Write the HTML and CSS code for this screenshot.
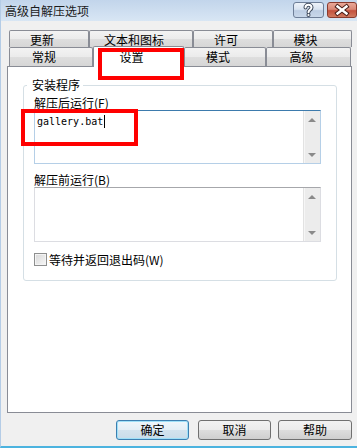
FILE: index.html
```html
<!DOCTYPE html>
<html lang="zh-CN">
<head>
<meta charset="utf-8">
<title>高级自解压选项</title>
<link rel="stylesheet" href="styles.css">
</head>
<body>
<div class="window">
  <div class="titlebar">
    <span class="title">高级自解压选项</span>
    <div class="caption-btns">
      <div class="cbtn help">
        <svg width="31" height="16" viewBox="-15.5 -8 31 16">
          <path d="M-3 -2.6 C-3 -6 3 -6 3 -2.6 C3 -0.3 0 -0.3 0 2.2" fill="none" stroke="#3d4a5c" stroke-width="4" stroke-linecap="round"/>
          <circle cx="0" cy="5" r="2" fill="#3d4a5c"/>
          <path d="M-3 -2.6 C-3 -6 3 -6 3 -2.6 C3 -0.3 0 -0.3 0 2.2" fill="none" stroke="#fff" stroke-width="2" stroke-linecap="round"/>
          <circle cx="0" cy="5" r="1.1" fill="#fff"/>
        </svg>
      </div>
      <div class="cbtn close">
        <svg width="30" height="16" viewBox="-15 -8 30 16">
          <path d="M-4.5 -3.5 L4.5 3.5 M4.5 -3.5 L-4.5 3.5" stroke="#4a1e18" stroke-width="4.4" stroke-linecap="square"/>
          <path d="M-4.5 -3.5 L4.5 3.5 M4.5 -3.5 L-4.5 3.5" stroke="#fff" stroke-width="2.4" stroke-linecap="square"/>
        </svg>
      </div>
    </div>
  </div>

  <div class="body">
    <div class="tabs">
      <div class="tabrow row1">
        <div class="tab t-update">更新</div>
        <div class="tab t-text">文本和图标</div>
        <div class="tab t-license">许可</div>
        <div class="tab t-module">模块</div>
      </div>
      <div class="tabrow row2">
        <div class="tab t-general">常规</div>
        <div class="tab t-setup selected">设置</div>
        <div class="tab t-mode">模式</div>
        <div class="tab t-advanced">高级</div>
      </div>
    </div>

    <div class="panel">
      <fieldset class="group">
        <legend>安装程序</legend>
        <div class="lbl">解压后运行(F)</div>
        <div class="edit focused">
          <div class="edit-text"><span class="mono">gallery.bat</span><span class="caret"></span></div>
          <div class="vscroll">
            <div class="sarrow up"></div>
            <div class="sarrow down"></div>
          </div>
        </div>
        <div class="lbl lbl2">解压前运行(B)</div>
        <div class="edit plain">
          <div class="edit-text"></div>
          <div class="vscroll">
            <div class="sarrow up"></div>
            <div class="sarrow down"></div>
          </div>
        </div>
        <div class="check"><span class="box"></span><span>等待并返回退出码(W)</span></div>
      </fieldset>
    </div>

    <div class="buttons">
      <div class="btn default">确定</div>
      <div class="btn cancel">取消</div>
      <div class="btn helpbtn">帮助</div>
    </div>
  </div>

  <div class="mark mark1"></div>
  <div class="mark mark2"></div>
</div>
</body>
</html>
```

FILE: styles.css
```css
html, body {
  margin: 0;
  padding: 0;
  background: #f0f0f0;
}

.window {
  position: relative;
  width: 357px;
  height: 448px;
  box-sizing: border-box;
  background: #f0f0f0;
  border-left: 1px solid #b4cce6;
  border-bottom: 2px solid #4cb3df;
  font-family: "Noto Sans CJK SC", "Noto Sans", sans-serif;
  font-size: 12px;
  color: #000;
  overflow: hidden;
}

/* title bar */
.titlebar {
  height: 21px;
  display: flex;
  align-items: flex-start;
  background: linear-gradient(#c2d5eb, #d8e6f4);
  padding-left: 4px;
}

.title {
  line-height: 21px;
  color: #1b1b1b;
}

.caption-btns {
  margin-left: auto;
  display: flex;
  margin-top: 2px;
}

.cbtn {
  box-sizing: border-box;
  height: 16px;
  border-radius: 3px;
  display: flex;
  align-items: center;
  justify-content: center;
  overflow: hidden;
}

.cbtn svg {
  display: block;
  flex: none;
}

.help {
  width: 31px;
  border: 1px solid #6e7f98;
  background: linear-gradient(#eef3f9 0%, #d9e4f1 45%, #bccde3 55%, #c9d8ea 100%);
}

.close {
  width: 30px;
  margin-left: 3px;
  margin-right: 0;
  border: 1px solid #8a3b2e;
  background: linear-gradient(#eaa898 0%, #d98876 45%, #c4513d 55%, #d07a5f 100%);
}

/* body */
.body {
  padding: 9px 0 0 6px;
}

.tabs {
  margin-left: 2px;
}

.tabrow {
  display: flex;
}

.tab {
  box-sizing: border-box;
  border: 1px solid #898c95;
  border-bottom: none;
  border-radius: 2px 2px 0 0;
  background: linear-gradient(#f3f3f3 0%, #ebebeb 50%, #dedede 51%, #d6d6d6 100%);
  text-align: center;
  padding-right: 14px;
  white-space: nowrap;
}

.row1 .tab {
  height: 17px;
  padding-top: 1px;
  line-height: 15px;
  overflow: hidden;
}

.row2 .tab {
  height: 19px;
  line-height: 17px;
}

.t-update { width: 80px; }
.t-text { width: 104px; }
.t-license { width: 80px; }
.t-module { width: 79px; }

.t-general { width: 84px; }
.t-setup { width: 91px; }
.t-mode { width: 82px; }
.t-advanced { width: 85px; }

.row2 .tab.selected {
  position: relative;
  z-index: 1;
  height: 21px;
  margin-top: -1px;
  margin-bottom: -1px;
  padding-top: 1px;
  background: #fff;
}

/* panel */
.panel {
  box-sizing: border-box;
  width: 345px;
  height: 347px;
  border: 1px solid #898c95;
  background: #fff;
  padding: 11px 0 0 15px;
}

.group {
  box-sizing: border-box;
  width: 314px;
  margin: 0;
  border: 1px solid #d5dfe5;
  border-radius: 3px;
  padding: 4px 15px 14px 10px;
}

.group legend {
  padding: 0 3px 0 5px;
  margin-left: -7px;
  line-height: 14px;
}

.lbl {
  line-height: 14px;
}

.lbl2 {
  margin-top: 9px;
}

.edit {
  box-sizing: border-box;
  display: flex;
  width: 287px;
  background: #fff;
}

.edit.focused {
  height: 54px;
  border: 1px solid #b5cfe7;
  border-top-color: #3d7bad;
}

.edit.plain {
  height: 55px;
  border: 1px solid #dcdde2;
  border-top-color: #a6a7ab;
}

.edit-text {
  flex: 1;
  padding: 4px 0 0 2px;
  display: flex;
  align-items: flex-start;
}

.mono {
  font-family: "DejaVu Sans Mono", "Liberation Mono", monospace;
  font-size: 10px;
  line-height: 13px;
  color: #000;
}

.caret {
  width: 1px;
  height: 13px;
  background: #000;
  margin-left: 1px;
}

.vscroll {
  width: 16px;
  display: flex;
  flex-direction: column;
  justify-content: space-between;
  background: #ececec;
  border-left: 1px solid #e2e2e2;
  box-shadow: inset 1px 0 0 #f6f6f6;
}

.sarrow {
  height: 17px;
  display: flex;
  align-items: center;
  justify-content: center;
}

.sarrow::before {
  content: "";
  width: 0;
  height: 0;
  border-left: 4px solid transparent;
  border-right: 4px solid transparent;
}

.sarrow.up::before {
  border-bottom: 4px solid #8a8a8a;
}

.sarrow.down::before {
  border-top: 4px solid #8a8a8a;
}

.check {
  margin-top: 11px;
  display: flex;
  align-items: center;
  line-height: 13px;
  height: 13px;
}

.check .box {
  box-sizing: border-box;
  width: 13px;
  height: 13px;
  border: 1px solid #8e8f8f;
  background: linear-gradient(135deg, #d8d8d8, #f7f7f7);
  box-shadow: inset 0 0 0 1px #f4f4f4;
  margin-right: 2px;
}

/* bottom buttons */
.buttons {
  display: flex;
  justify-content: flex-end;
  margin-top: 7px;
  padding-right: 5px;
}

.btn {
  box-sizing: border-box;
  width: 73px;
  height: 20px;
  border: 1px solid #707070;
  border-radius: 3px;
  background: linear-gradient(#f2f2f2 0%, #ebebeb 50%, #dddddd 51%, #cfcfcf 100%);
  text-align: center;
  line-height: 18px;
}

.btn.default {
  border-color: #3c7fb1;
  box-shadow: inset 0 0 0 1px #9fe0f8;
  background: linear-gradient(#eef6fb 0%, #e3eef6 50%, #d3e3ee 51%, #c9dce9 100%);
}

.btn.cancel {
  margin-left: 9px;
}

.btn.helpbtn {
  margin-left: 7px;
  width: 74px;
}

/* red annotation boxes drawn over the dialog */
.mark {
  position: absolute;
  box-sizing: border-box;
  border: 4px solid #ff0000;
  z-index: 5;
}

.mark1 {
  left: 97px;
  top: 48px;
  width: 86px;
  height: 32px;
}

.mark2 {
  left: 20px;
  top: 109px;
  width: 117px;
  height: 37px;
}
```
